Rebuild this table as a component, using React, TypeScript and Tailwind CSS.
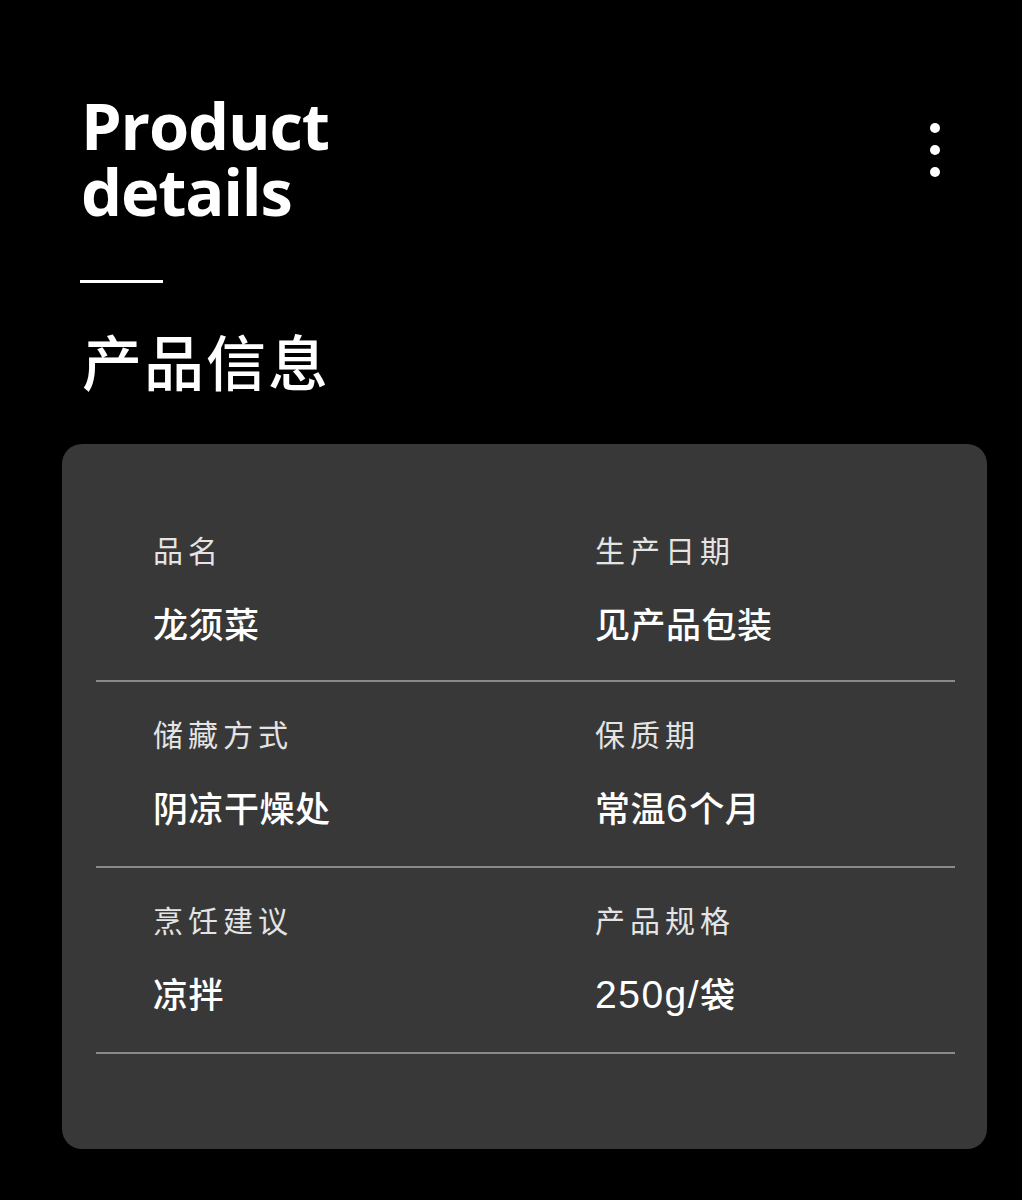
import React from "react";

const rows: [string, string, string, string][] = [
  ["品名", "龙须菜", "生产日期", "见产品包装"],
  ["储藏方式", "阴凉干燥处", "保质期", "常温6个月"],
  ["烹饪建议", "凉拌", "产品规格", "250g/袋"],
];

const cjk = { fontFamily: '"Noto Sans CJK SC", "Noto Sans", sans-serif' };

function Value({ text }: { text: string }) {
  const parts = text.split(/([0-9A-Za-z/]+)/).filter((p) => p.length > 0);
  return (
    <>
      {parts.map((p, i) =>
        /^[0-9A-Za-z/]+$/.test(p) ? (
          <span
            key={i}
            className="text-[39px] font-normal tracking-[1.5px]"
            style={{ fontFamily: '"Liberation Sans", sans-serif' }}
          >
            {p}
          </span>
        ) : (
          <span key={i}>{p}</span>
        )
      )}
    </>
  );
}

function Cell({ label, value }: { label: string; value: string }) {
  return (
    <div className="flex flex-col">
      <div className="text-[30px] leading-[36px] tracking-[5px] text-[#e4e4e4] font-normal -mt-[2px]" style={cjk}>
        {label}
      </div>
      <div
        className="mt-[36px] text-[35px] leading-[40px] tracking-[0.5px] text-white font-medium whitespace-nowrap"
        style={cjk}
      >
        <Value text={value} />
      </div>
    </div>
  );
}

export default function App() {
  return (
    <div className="w-[1022px] h-[1200px] bg-black overflow-hidden flex flex-col">
      <div className="flex justify-between pl-[81px] pr-[82px] pt-[92px]">
        <div
          className="text-white font-bold text-[65px] leading-[66px] tracking-[-1.2px]"
          style={{ fontFamily: '"Open Sans", sans-serif' }}
        >
          <div>Product</div>
          <div>details</div>
        </div>
        <div className="flex flex-col gap-[12px] mt-[31px]">
          <span className="block w-[10px] h-[10px] rounded-full bg-white" />
          <span className="block w-[10px] h-[10px] rounded-full bg-white" />
          <span className="block w-[10px] h-[10px] rounded-full bg-white" />
        </div>
      </div>
      <div className="ml-[80px] mt-[56px] w-[83px] h-[3px] bg-white" />
      <div
        className="ml-[82px] mt-[47px] text-[60px] leading-[60px] text-white font-medium tracking-[2px]"
        style={cjk}
      >
        产品信息
      </div>
      <div className="mt-[54px] ml-[62px] mr-[35px] bg-[#383838] rounded-[20px] pl-[34px] pr-[32px] pt-[54px] pb-[95px]">
        {rows.map((r, i) => (
          <div
            key={i}
            className="grid grid-cols-[442px_1fr] pl-[57px] pt-[35px] pb-[37px] border-b-[2px] border-[#8a8a8a]"
          >
            <Cell label={r[0]} value={r[1]} />
            <Cell label={r[2]} value={r[3]} />
          </div>
        ))}
      </div>
    </div>
  );
}
